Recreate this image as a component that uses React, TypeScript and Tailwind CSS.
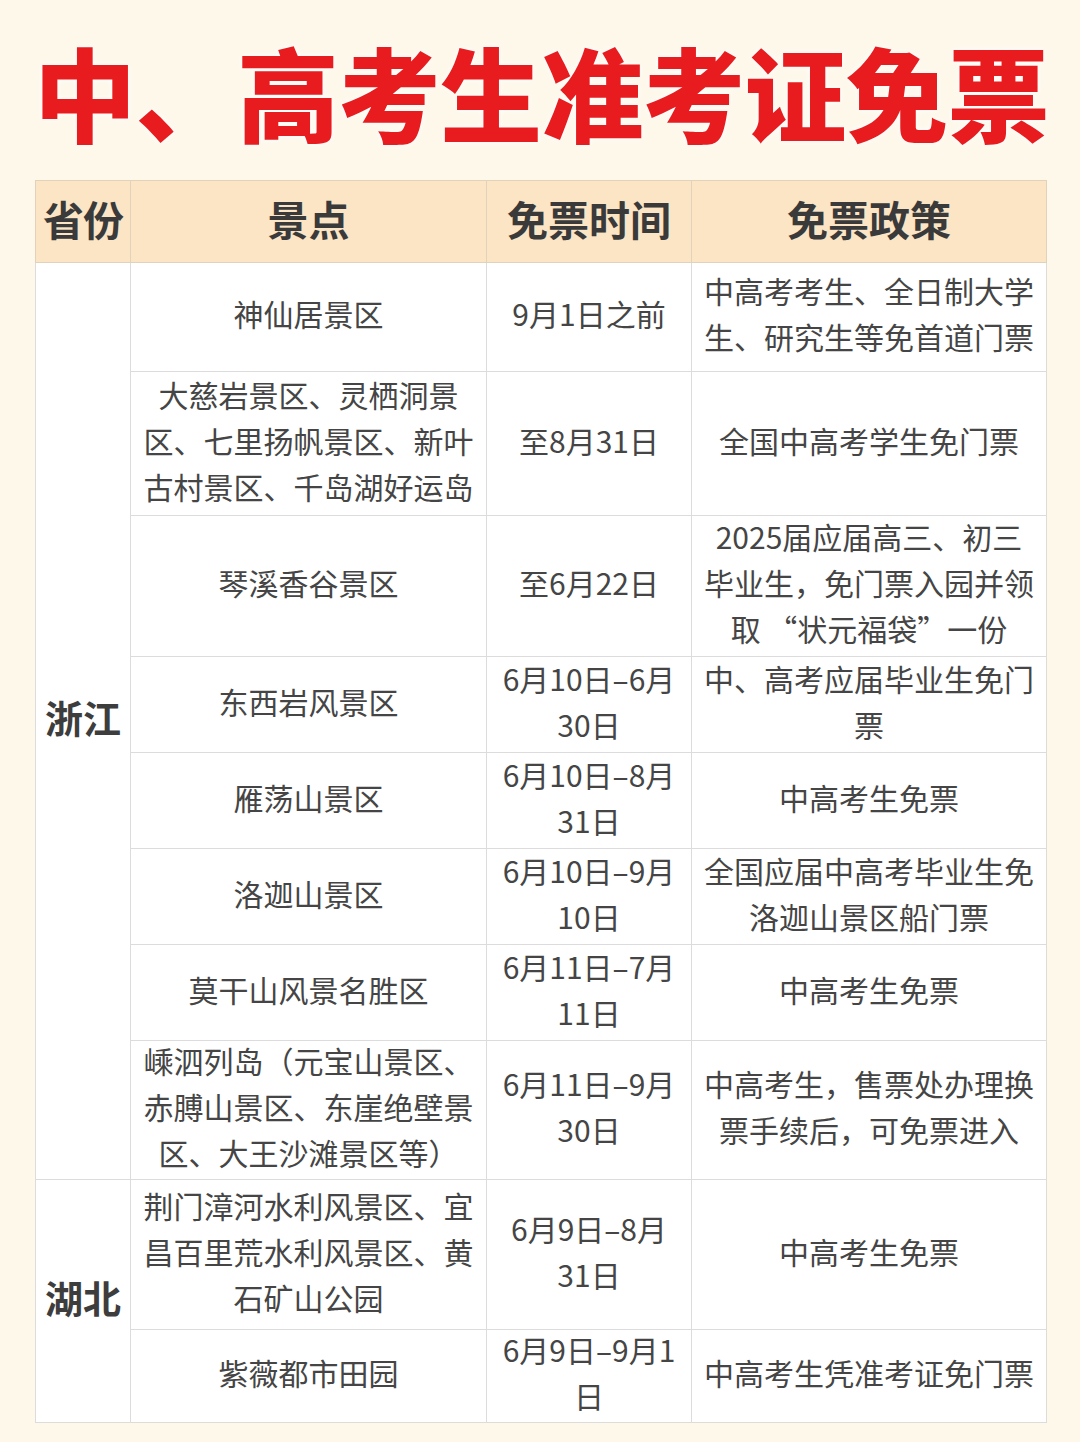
const rows: { spot: string[]; time: string[]; policy: string[]; h: string }[] = [
  { spot: ["神仙居景区"], time: ["9月1日之前"], policy: ["中高考考生、全日制大学", "生、研究生等免首道门票"], h: "h-[109px]" },
  {
    spot: ["大慈岩景区、灵栖洞景", "区、七里扬帆景区、新叶", "古村景区、千岛湖好运岛"],
    time: ["至8月31日"],
    policy: ["全国中高考学生免门票"],
    h: "h-[144px]",
  },
  {
    spot: ["琴溪香谷景区"],
    time: ["至6月22日"],
    policy: ["2025届应届高三、初三", "毕业生，免门票入园并领", "取 “状元福袋”一份"],
    h: "h-[141px]",
  },
  { spot: ["东西岩风景区"], time: ["6月10日–6月", "30日"], policy: ["中、高考应届毕业生免门", "票"], h: "h-[96px]" },
  { spot: ["雁荡山景区"], time: ["6月10日–8月", "31日"], policy: ["中高考生免票"], h: "h-[96px]" },
  { spot: ["洛迦山景区"], time: ["6月10日–9月", "10日"], policy: ["全国应届中高考毕业生免", "洛迦山景区船门票"], h: "h-[96px]" },
  { spot: ["莫干山风景名胜区"], time: ["6月11日–7月", "11日"], policy: ["中高考生免票"], h: "h-[96px]" },
  {
    spot: ["嵊泗列岛（元宝山景区、", "赤膊山景区、东崖绝壁景", "区、大王沙滩景区等）"],
    time: ["6月11日–9月", "30日"],
    policy: ["中高考生，售票处办理换", "票手续后，可免票进入"],
    h: "h-[139px]",
  },
  {
    spot: ["荆门漳河水利风景区、宜", "昌百里荒水利风景区、黄", "石矿山公园"],
    time: ["6月9日–8月", "31日"],
    policy: ["中高考生免票"],
    h: "h-[150px]",
  },
  { spot: ["紫薇都市田园"], time: ["6月9日–9月1", "日"], policy: ["中高考生凭准考证免门票"], h: "h-[93px]" },
]

function Lines({ lines }: { lines: string[] }) {
  return (
    <div className="-translate-y-1">
      {lines.map((l, i) => (
        <div key={i} className="whitespace-nowrap">
          {l}
        </div>
      ))}
    </div>
  )
}

export default function App() {
  const cell = "border border-[#dcdcdc] px-1 text-center align-middle"
  return (
    <div
      className="w-[1080px] h-[1442px] bg-[#fdf8ea] overflow-hidden"
      style={{ fontFamily: '"Noto Sans CJK SC", "Noto Sans", sans-serif' }}
    >
      <h1 className="pt-[35px] pb-[5px] pl-[34px] text-[102px] leading-[112px] font-black text-[#e81b1f] tracking-[-0.5px] whitespace-nowrap [text-shadow:0_0_3px_#fff,0_0_6px_#fff]">
        中、高考生准考证免票
      </h1>
      <table className="mt-[28px] ml-[35px] w-[1011px] table-fixed border-collapse bg-white text-[30px] leading-[46px] text-[#454545]">
        <colgroup>
          <col className="w-[95px]" />
          <col className="w-[356px]" />
          <col className="w-[205px]" />
          <col className="w-[355px]" />
        </colgroup>
        <thead>
          <tr className="h-[82px] bg-[#fbe5c5] text-[41px] font-bold text-[#3a3a3a]">
            <th className="border border-[#e0d2bb] text-center whitespace-nowrap tracking-[-1px]">
              <Lines lines={["省份"]} />
            </th>
            <th className="border border-[#e0d2bb] text-center">
              <Lines lines={["景点"]} />
            </th>
            <th className="border border-[#e0d2bb] text-center">
              <Lines lines={["免票时间"]} />
            </th>
            <th className="border border-[#e0d2bb] text-center">
              <Lines lines={["免票政策"]} />
            </th>
          </tr>
        </thead>
        <tbody>
          {rows.map((r, i) => (
            <tr key={i} className={r.h}>
              {i === 0 && (
                <td rowSpan={8} className={`${cell} text-[38px] font-bold text-[#3d3d3d]`}>
                  <Lines lines={["浙江"]} />
                </td>
              )}
              {i === 8 && (
                <td rowSpan={2} className={`${cell} text-[38px] font-bold text-[#3d3d3d]`}>
                  <Lines lines={["湖北"]} />
                </td>
              )}
              <td className={cell}>
                <Lines lines={r.spot} />
              </td>
              <td className={cell}>
                <Lines lines={r.time} />
              </td>
              <td className={cell}>
                <Lines lines={r.policy} />
              </td>
            </tr>
          ))}
        </tbody>
      </table>
    </div>
  )
}
